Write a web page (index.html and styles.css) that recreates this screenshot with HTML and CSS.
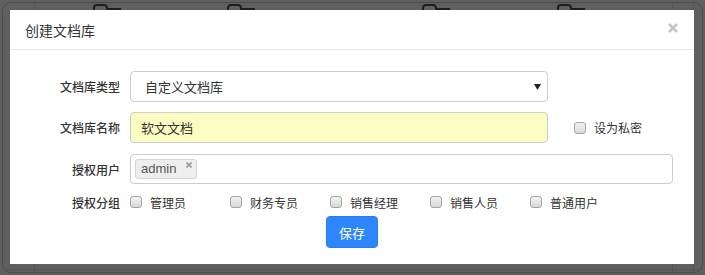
FILE: index.html
```html
<!DOCTYPE html>
<html lang="zh-CN">
<head>
    <meta charset="UTF-8">
    <title>创建文档库</title>
    <link rel="stylesheet" href="styles.css">
</head>
<body>
    <div class="desk">
        <span class="vline" style="left: 31px"></span>
        <span class="vline" style="left: 669px"></span>
        <span class="vline" style="left: 690px"></span>
        <span class="hline" style="top: 266px"></span>
        <svg class="folder" style="left: 90px" width="30" height="10" viewBox="0 0 30 10"><path d="M1 10V4a3 3 0 0 1 3-3h7a3 3 0 0 1 3 3v1h14" fill="none" stroke="#1e1e1e" stroke-width="2"/></svg>
        <svg class="folder" style="left: 224px" width="30" height="10" viewBox="0 0 30 10"><path d="M1 10V4a3 3 0 0 1 3-3h7a3 3 0 0 1 3 3v1h14" fill="none" stroke="#1e1e1e" stroke-width="2"/></svg>
        <svg class="folder" style="left: 419px" width="30" height="10" viewBox="0 0 30 10"><path d="M1 10V4a3 3 0 0 1 3-3h7a3 3 0 0 1 3 3v1h14" fill="none" stroke="#1e1e1e" stroke-width="2"/></svg>
        <svg class="folder" style="left: 554px" width="30" height="10" viewBox="0 0 30 10"><path d="M1 10V4a3 3 0 0 1 3-3h7a3 3 0 0 1 3 3v1h14" fill="none" stroke="#1e1e1e" stroke-width="2"/></svg>
    </div>

    <div class="modal">
        <div class="modal-header">
            <h4 class="modal-title">创建文档库</h4>
            <svg class="close" width="10" height="10" viewBox="0 0 10 10"><path d="M1 1L9 9M9 1L1 9" stroke="#c4c4c4" stroke-width="2.6"/></svg>
        </div>
        <div class="modal-body">
            <div class="row">
                <label class="control-label">文档库类型</label>
                <div class="form-control select">
                    <span>自定义文档库</span>
                    <svg width="7" height="6" viewBox="0 0 7 6"><path d="M0 0h7L3.5 6z" fill="#222"/></svg>
                </div>
            </div>
            <div class="row row-name">
                <label class="control-label">文档库名称</label>
                <div class="form-control name-input">软文文档</div>
                <label class="check private"><span class="box"></span>设为私密</label>
            </div>
            <div class="row row-users">
                <label class="control-label">授权用户</label>
                <div class="form-control tags">
                    <span class="tag">admin<svg width="6" height="6" viewBox="0 0 6 6"><path d="M0.5 0.5L5.5 5.5M5.5 0.5L0.5 5.5" stroke="#9a9a9a" stroke-width="1.6"/></svg></span>
                </div>
            </div>
            <div class="row row-groups">
                <label class="control-label">授权分组</label>
                <label class="check group"><span class="box"></span>管理员</label>
                <label class="check group"><span class="box"></span>财务专员</label>
                <label class="check group"><span class="box"></span>销售经理</label>
                <label class="check group"><span class="box"></span>销售人员</label>
                <label class="check group"><span class="box"></span>普通用户</label>
            </div>
            <div class="actions">
                <button class="btn-primary">保存</button>
            </div>
        </div>
    </div>
</body>
</html>
```

FILE: styles.css
```css
body {
    margin: 0;
    padding: 10px 11px 11px 10px;
    background: #5f5f5f;
    font-family: "Liberation Sans", "Noto Sans CJK SC", sans-serif;
    color: #333;
    overflow: hidden;
}
.desk {
    position: absolute;
    left: 2px;
    top: 2px;
    width: 699px;
    height: 269px;
    border: 1px solid #4e4e4e;
    border-radius: 9px;
}
.desk .vline {
    position: absolute;
    top: 0;
    bottom: 0;
    width: 1px;
    background: #565656;
}
.desk .hline {
    position: absolute;
    left: 0;
    right: 0;
    height: 1px;
    background: #565656;
}
.desk .folder {
    position: absolute;
    top: 1px;
}
.modal {
    position: relative;
    background: #fff;
    height: 254px;
    display: flex;
    flex-direction: column;
}
.modal-header {
    height: 39px;
    border-bottom: 1px solid #e5e5e5;
    display: flex;
    align-items: center;
    justify-content: space-between;
    padding: 0 16px 0 15px;
}
.modal-title {
    margin: 0;
    font-size: 14px;
    font-weight: normal;
    color: #333;
}
.close {
    margin-top: -4px;
}
.modal-body {
    padding: 21px 0 15px 0;
    display: flex;
    flex-direction: column;
}
.row {
    display: flex;
    align-items: center;
    padding-right: 21px;
}
.control-label {
    width: 110px;
    margin-right: 10px;
    text-align: right;
    font-size: 12px;
    font-weight: 500;
    color: #333;
}
.form-control {
    box-sizing: border-box;
    height: 31px;
    border: 1px solid #ccc;
    border-radius: 4px;
    font-size: 13px;
    color: #333;
    display: flex;
    align-items: center;
}
.select {
    width: 418px;
    padding: 0 6px 0 14px;
    justify-content: space-between;
}
.row-name {
    margin-top: 10px;
}
.name-input {
    width: 418px;
    padding-left: 10px;
    background: #fafcc2;
}
.check {
    display: flex;
    align-items: center;
    font-size: 12px;
    color: #333;
}
.check .box {
    box-sizing: border-box;
    width: 12px;
    height: 12px;
    margin-right: 8px;
    border: 1px solid #a4a4a4;
    border-radius: 3px;
    background: linear-gradient(#f2f2f2, #d9d9d9);
}
.private {
    margin-left: 26px;
}
.row-users {
    margin-top: 11px;
}
.tags {
    flex: 1;
    height: 30px;
    padding-left: 4px;
}
.tag {
    display: flex;
    align-items: flex-start;
    box-sizing: border-box;
    height: 20px;
    line-height: 18px;
    padding: 0 4px 0 5px;
    border: 1px solid #d6d6d6;
    border-radius: 3px;
    background: #eee;
    color: #555;
    font-size: 13px;
}
.tag svg {
    margin: 2px 0 0 10px;
}
.row-groups {
    margin-top: 9px;
    height: 18px;
}
.group {
    width: 100px;
}
.actions {
    display: flex;
    justify-content: center;
    margin-top: 5px;
}
.btn-primary {
    width: 52px;
    height: 32px;
    border: 1px solid #2b7cf0;
    border-radius: 4px;
    background: #2e86fd;
    color: #fff;
    font-family: "Liberation Sans", "Noto Sans CJK SC", sans-serif;
    font-size: 13px;
    padding: 0;
}
```
